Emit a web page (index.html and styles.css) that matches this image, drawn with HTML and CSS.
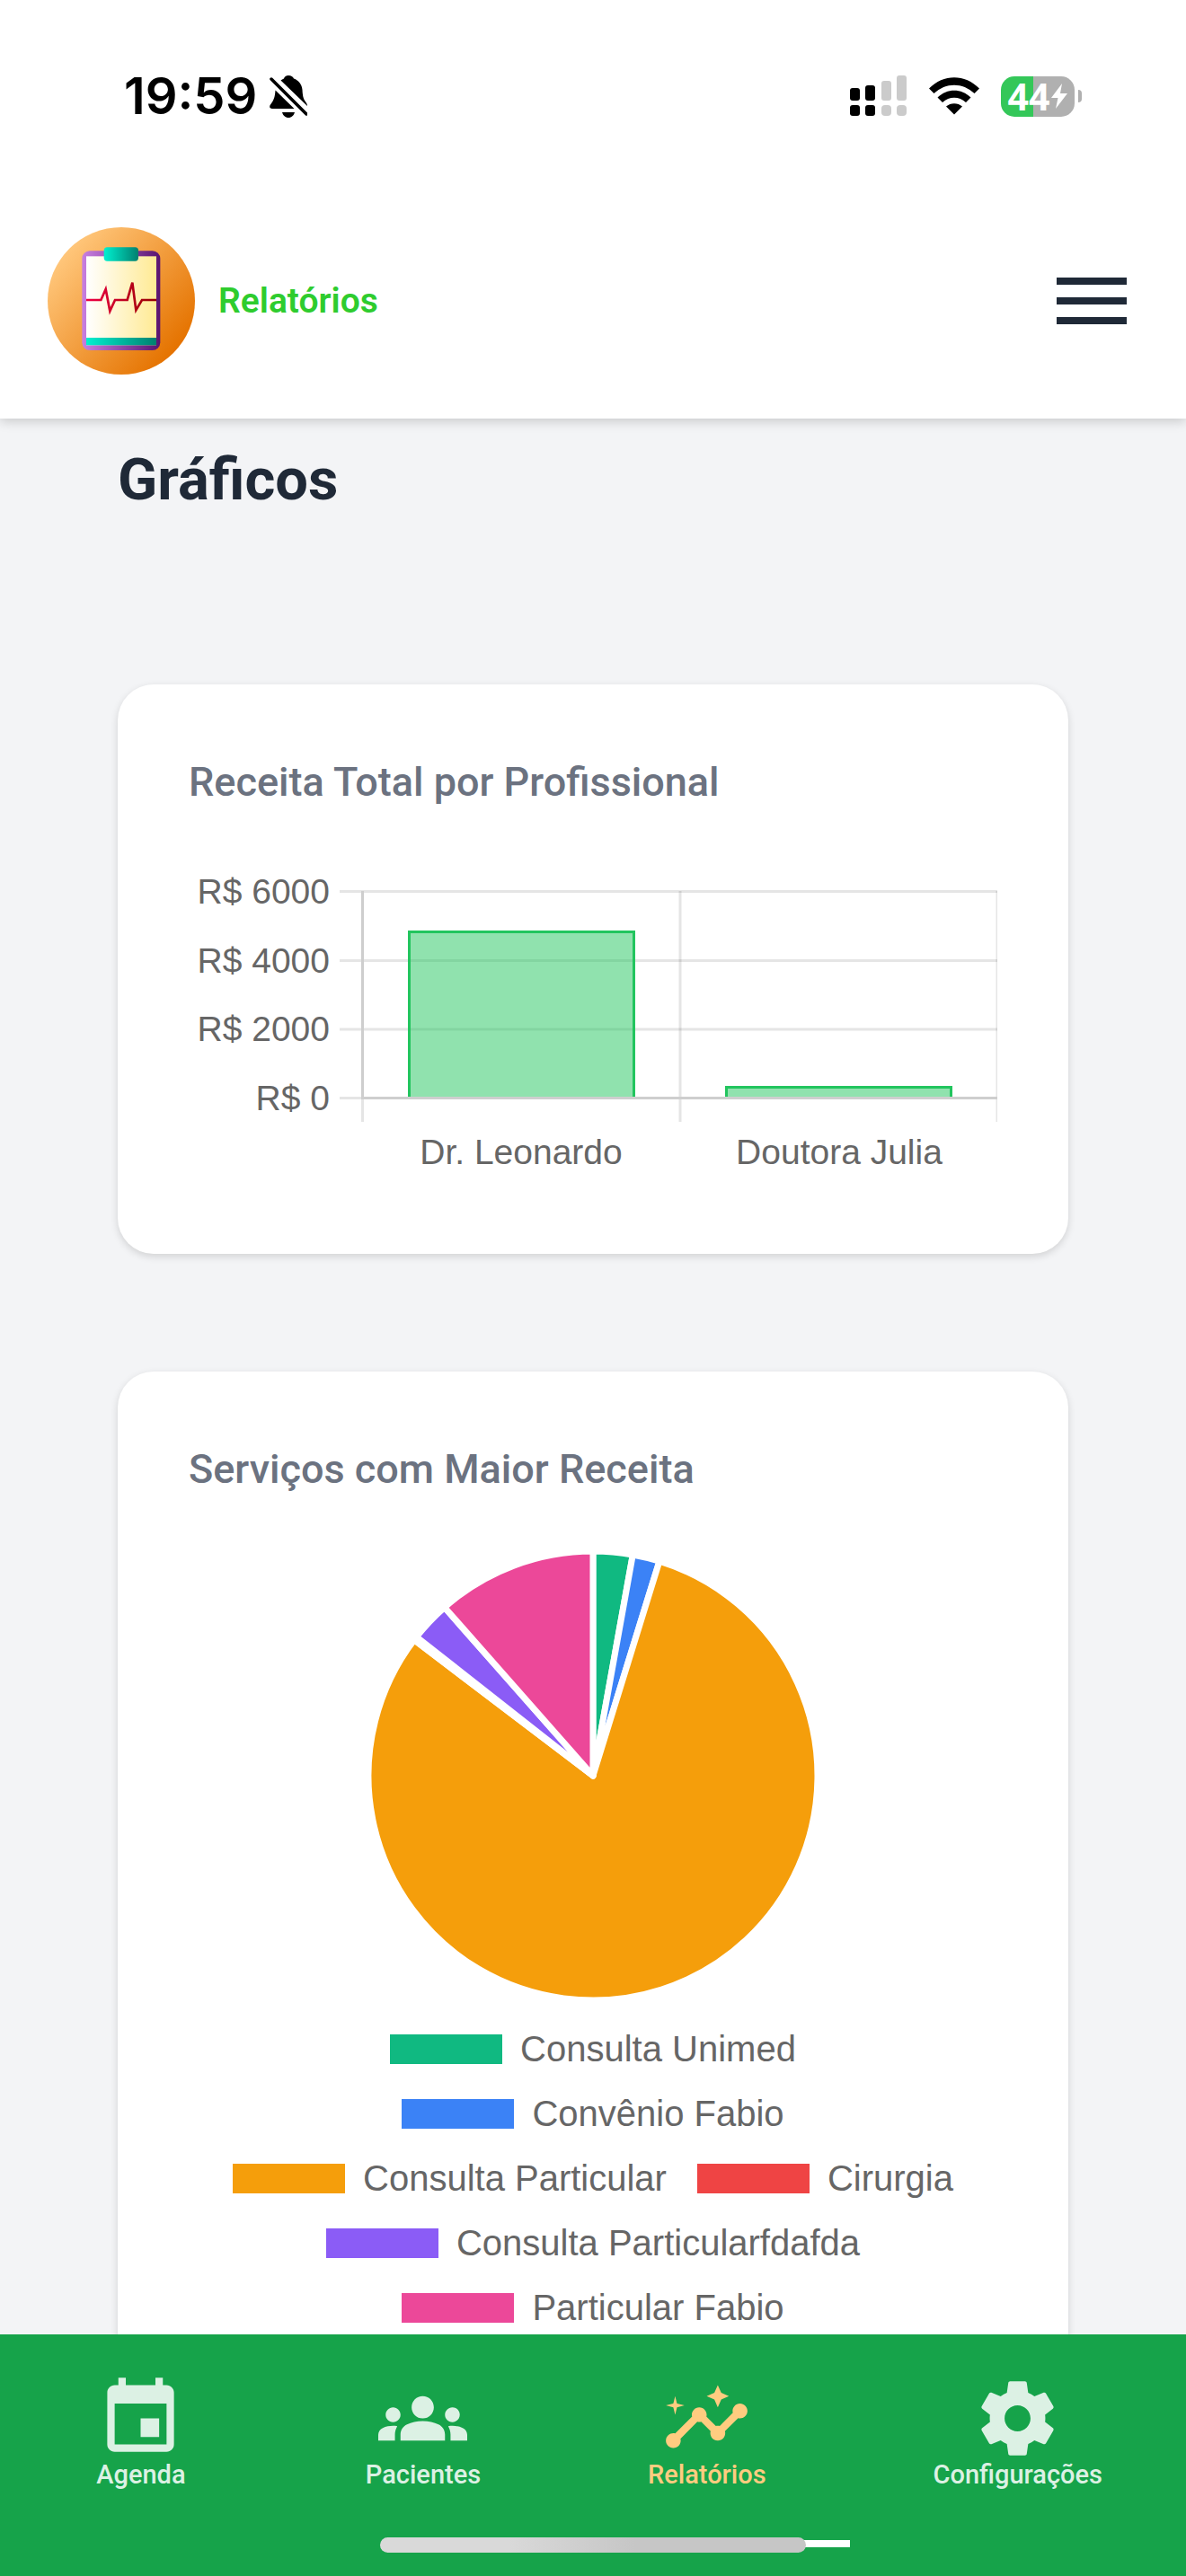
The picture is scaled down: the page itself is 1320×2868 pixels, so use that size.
FILE: index.html
```html
<!DOCTYPE html>
<html lang="pt-BR">
<head>
  <meta charset="UTF-8">
  <meta name="viewport" content="width=device-width, initial-scale=1.0">
  <title>Relatórios</title>
  <link rel="stylesheet" href="styles.css">
</head>
<body>
  <div class="app">
    <header class="header">
      <!-- Status bar -->
      <div class="status-bar">
        <div class="status-left">
          <span class="status-time">19:59</span>
          <svg class="icon-bell" viewBox="0 0 42 47" aria-hidden="true">
            <path d="M21 0c3 0 5 1.500 6 3.500 5.500 2 9 6.500 9.500 12.500.3 6 1 9.500 3 12.500 1.500 2 2.500 3.500 2.500 5.500L12.500 5.500c1-.8 2-1.500 3.500-2C16.500 1.500 18.500 0 21 0z"/>
            <path d="M6.500 16.500L27.500 37H3c-3 0-3.500-2.500-2-4.500 3.500-4.500 5-8 5.500-16z"/>
            <path d="M14 41h14c-1 3.500-3.500 6-7 6s-6-2.500-7-6z"/>
            <path d="M2 4l39 39" stroke="#000" stroke-width="3.500" stroke-linecap="round"/>
          </svg>
        </div>
        <div class="status-right">
          <svg class="icon-signal" viewBox="0 0 64 46" aria-hidden="true">
            <rect x="0" y="14" width="11" height="14" rx="3"/>
            <rect x="17" y="11" width="11" height="17" rx="3"/>
            <rect x="0" y="33" width="11" height="12" rx="3"/>
            <rect x="17" y="33" width="11" height="12" rx="3"/>
            <g fill="#cbcbcb">
              <rect x="35" y="6" width="11" height="22" rx="3"/>
              <rect x="52" y="0" width="11" height="28" rx="3"/>
              <rect x="35" y="33" width="11" height="12" rx="4"/>
              <rect x="52" y="33" width="11" height="12" rx="4"/>
            </g>
          </svg>
          <svg class="icon-wifi" viewBox="0 0 56 42" aria-hidden="true">
            <path d="M0 12.500C16-4 40-4 56 12.500L50.500 18C37.500 5.500 18.500 5.500 5.500 18z"/>
            <path d="M9.500 22.500c10.500-10.500 26.500-10.500 37 0L41 28c-7.500-7-18.500-7-26 0z"/>
            <path d="M19 32.500c5-4.500 13-4.500 18 0L28 41.500z"/>
          </svg>
          <div class="battery">
            <span class="battery-body">
              <span class="battery-level">44</span>
              <svg class="icon-bolt" viewBox="0 0 18 28" aria-hidden="true">
                <path d="M12 0L0 16h7.500L5 28l13-17h-8z" fill="#fff"/>
              </svg>
            </span>
            <span class="battery-cap"></span>
          </div>
        </div>
      </div>

      <!-- Title bar -->
      <div class="top-bar">
        <div class="brand">
          <svg class="logo" viewBox="0 0 492 492" aria-hidden="true">
            <defs>
              <linearGradient id="logoBg" x1="0.100" y1="0.200" x2="0.850" y2="0.850">
                <stop offset="0" stop-color="#ffc67a"/>
                <stop offset="1" stop-color="#e57300"/>
              </linearGradient>
              <linearGradient id="logoBoard">
                <stop offset="0" stop-color="#c87fe0"/>
                <stop offset="1" stop-color="#5a1370"/>
              </linearGradient>
              <linearGradient id="logoPaper">
                <stop offset="0" stop-color="#ffffff"/>
                <stop offset="1" stop-color="#ffea94"/>
              </linearGradient>
              <linearGradient id="logoTeal">
                <stop offset="0" stop-color="#00f0d0"/>
                <stop offset="1" stop-color="#00806f"/>
              </linearGradient>
              <linearGradient id="logoPulse" gradientUnits="userSpaceOnUse" x1="129" y1="0" x2="363" y2="0">
                <stop offset="0" stop-color="#f00044"/>
                <stop offset="1" stop-color="#960000"/>
              </linearGradient>
            </defs>
            <circle cx="246" cy="246" r="246" fill="url(#logoBg)"/>
            <rect x="115" y="79" width="261" height="332" rx="26" fill="url(#logoBoard)"/>
            <rect x="129" y="97" width="234" height="297" fill="url(#logoPaper)"/>
            <rect x="129" y="369" width="234" height="25" fill="url(#logoTeal)"/>
            <rect x="188" y="67" width="115" height="46" rx="11" fill="url(#logoTeal)"/>
            <path d="M129 243h49l16-36 14 73 17-37h41l17-58 12 92 20-34h48" fill="none" stroke="url(#logoPulse)" stroke-width="8"/>
          </svg>
          <span class="brand-title">Relatórios</span>
        </div>
        <button class="menu-button" type="button" aria-label="Menu">
          <span></span>
          <span></span>
          <span></span>
        </button>
      </div>
    </header>

    <main class="content">
      <h1>Gráficos</h1>

      <section class="card">
        <h2>Receita Total por Profissional</h2>
        <svg class="bar-chart" viewBox="0 0 900 380" role="img" aria-label="Receita Total por Profissional">
          <g class="grid">
            <path d="M168 54.500h732M168 131.500h732M168 208h732M168 284.500h732"/>
            <path d="M193.500 54v257M547 54v257M900 54v257"/>
          </g>
          <g class="bars">
            <rect x="244" y="98" width="253" height="186"/>
            <path d="M245.500 284V99.500h250V284"/>
            <rect x="597" y="271" width="253" height="13"/>
            <path d="M598.500 284v-11.500h250v11.500"/>
          </g>
          <path class="axis" d="M193.500 54v230M192 284.500h708"/>
          <g class="chart-text" text-anchor="end">
            <text x="157" y="68">R$ 6000</text>
            <text x="157" y="145">R$ 4000</text>
            <text x="157" y="221">R$ 2000</text>
            <text x="157" y="298">R$ 0</text>
          </g>
          <g class="chart-text" text-anchor="middle">
            <text x="370" y="358">Dr. Leonardo</text>
            <text x="724" y="358">Doutora Julia</text>
          </g>
        </svg>
      </section>

      <section class="card">
        <h2>Serviços com Maior Receita</h2>
        <svg class="pie-chart" viewBox="-250 -250 500 500" role="img" aria-label="Serviços com Maior Receita">
          <path fill="#10b981" d="M0 0V-250A250 250 0 0 1 44.300 -246z"/>
          <path fill="#3b82f6" d="M0 0L44.300 -246A250 250 0 0 1 73.900 -238.800z"/>
          <path fill="#f59e0b" d="M0 0L73.900 -238.800A250 250 0 1 1 -199.100 -151.200z"/>
          <path fill="#ef4444" d="M0 0L-199.100 -151.200A250 250 0 0 1 -196.500 -154.600z"/>
          <path fill="#8b5cf6" d="M0 0L-196.500 -154.600A250 250 0 0 1 -165.300 -187.500z"/>
          <path fill="#ec4899" d="M0 0L-165.300 -187.500A250 250 0 0 1 0 -250z"/>
        </svg>
        <ul class="legend">
          <li><span class="swatch green"></span>Consulta Unimed</li>
          <li><span class="swatch blue"></span>Convênio Fabio</li>
          <li><span class="swatch orange"></span>Consulta Particular</li>
          <li><span class="swatch red"></span>Cirurgia</li>
          <li><span class="swatch purple"></span>Consulta Particularfdafda</li>
          <li><span class="swatch pink"></span>Particular Fabio</li>
        </ul>
      </section>
    </main>

    <nav class="bottom-nav">
      <a href="#agenda">
        <svg viewBox="0 0 24 24" aria-hidden="true"><path d="M17 12h-5v5h5v-5zM16 1v2H8V1H6v2H5c-1.110 0-1.990.9-1.990 2L3 19c0 1.100.89 2 2 2h14c1.100 0 2-.9 2-2V5c0-1.100-.9-2-2-2h-1V1h-2zm3 18H5V8h14v11z"/></svg>
        <span>Agenda</span>
      </a>
      <a href="#pacientes">
        <svg viewBox="0 0 24 24" aria-hidden="true"><path d="M12 12.750c1.630 0 3.070.39 4.240.9 1.080.48 1.760 1.560 1.760 2.730V18H6v-1.610c0-1.180.68-2.260 1.760-2.730 1.170-.52 2.610-.91 4.240-.91zM4 13c1.100 0 2-.9 2-2s-.9-2-2-2-2 .9-2 2 .9 2 2 2zm1.130 1.100c-.37-.06-.74-.1-1.130-.1-.99 0-1.930.21-2.780.58C.48 14.900 0 15.620 0 16.430V18h4.500v-1.610c0-.83.23-1.610.63-2.290zM20 13c1.100 0 2-.9 2-2s-.9-2-2-2-2 .9-2 2 .9 2 2 2zm4 3.430c0-.81-.48-1.530-1.220-1.850-.85-.37-1.790-.58-2.780-.58-.39 0-.76.04-1.130.1.4.68.63 1.460.63 2.290V18H24v-1.570zM12 6c1.660 0 3 1.340 3 3s-1.340 3-3 3-3-1.340-3-3 1.340-3 3-3z"/></svg>
        <span>Pacientes</span>
      </a>
      <a class="active" href="#relatorios">
        <svg viewBox="0 0 24 24" aria-hidden="true"><path d="M21 8c-1.450 0-2.260 1.440-1.930 2.510l-3.550 3.560c-.3-.09-.74-.09-1.040 0l-2.550-2.550C12.270 10.450 11.460 9 10 9c-1.450 0-2.270 1.440-1.930 2.520l-4.560 4.550C2.440 15.740 1 16.550 1 18c0 1.100.9 2 2 2 1.450 0 2.260-1.440 1.930-2.510l4.550-4.560c.3.09.74.09 1.040 0l2.550 2.550C12.730 16.550 13.540 18 15 18c1.450 0 2.270-1.440 1.930-2.520l3.560-3.550C21.560 12.260 23 11.450 23 10c0-1.100-.9-2-2-2z"/><path d="M15 9l.94-2.070L18 6l-2.060-.93L15 3l-.92 2.070L12 6l2.080.93zM3.500 11L4 9l2-.5L4 8l-.5-2L3 8l-2 .5L3 9z"/></svg>
        <span>Relatórios</span>
      </a>
      <a href="#configuracoes">
        <svg viewBox="0 0 24 24" aria-hidden="true"><path d="M19.430 12.980c.04-.32.07-.64.07-.98s-.03-.66-.07-.98l2.110-1.650c.19-.15.24-.42.12-.64l-2-3.460c-.12-.22-.39-.3-.61-.22l-2.490 1c-.52-.4-1.080-.73-1.690-.98l-.38-2.650C14.460 2.180 14.250 2 14 2h-4c-.25 0-.46.18-.49.42l-.38 2.650c-.61.25-1.170.59-1.690.98l-2.490-1c-.23-.09-.49 0-.61.22l-2 3.460c-.13.22-.07.49.12.64l2.110 1.650c-.04.32-.07.65-.07.98s.03.66.07.98l-2.110 1.650c-.19.15-.24.42-.12.64l2 3.460c.12.22.39.3.61.22l2.490-1c.52.4 1.080.73 1.690.98l.38 2.650c.03.24.24.42.49.42h4c.25 0 .46-.18.49-.42l.38-2.650c.61-.25 1.170-.59 1.690-.98l2.490 1c.23.09.49 0 .61-.22l2-3.460c.12-.22.07-.49-.12-.64l-2.110-1.650zM12 15.500c-1.930 0-3.500-1.570-3.500-3.500s1.570-3.500 3.500-3.500 3.500 1.570 3.500 3.500-1.570 3.500-3.500 3.500z"/></svg>
        <span>Configurações</span>
      </a>
      <div class="nav-line"></div>
      <div class="home-indicator"></div>
    </nav>
  </div>
</body>
</html>
```
FILE: styles.css
```css
* {
  box-sizing: border-box;
}

body {
  margin: 0;
  font-family: Roboto, Arial, sans-serif;
  background: #f3f4f6;
  color: #1f2937;
}

.app {
  display: flex;
  flex-direction: column;
  height: 100vh;
}

/* Header */
.header {
  flex-shrink: 0;
  position: relative;
  z-index: 2;
  background: #fff;
  box-shadow: 0 3px 12px rgba(0, 0, 0, 0.18);
}

.status-bar {
  display: flex;
  justify-content: space-between;
  align-items: center;
  padding: 80px 116px 70px 138px;
  color: #000;
}

.status-left,
.status-right {
  display: flex;
  align-items: center;
  height: 54px;
}

.status-left {
  gap: 14px;
}

.status-right {
  gap: 24px;
}

.status-time {
  font-family: Inter, sans-serif;
  font-size: 56px;
  line-height: 54px;
  font-weight: 600;
}

.icon-bell {
  width: 42px;
  height: 47px;
}

.icon-signal {
  width: 64px;
  height: 46px;
}

.icon-wifi {
  width: 56px;
  height: 42px;
}

.battery {
  display: flex;
  align-items: center;
  gap: 4px;
}

.battery-body {
  display: flex;
  align-items: center;
  justify-content: center;
  gap: 2px;
  width: 82px;
  height: 45px;
  border-radius: 15px;
  background: linear-gradient(to right, #34c759 44%, #b0b0b0 44%);
}

.battery-level {
  font-family: "Open Sans", sans-serif;
  font-size: 41px;
  line-height: 45px;
  font-weight: 700;
  color: #fff;
}

.icon-bolt {
  width: 18px;
  height: 28px;
}

.battery-cap {
  width: 4px;
  height: 14px;
  border-radius: 0 4px 4px 0;
  background: #b0b0b0;
}

.top-bar {
  display: flex;
  justify-content: space-between;
  align-items: center;
  padding: 49px 66px 49px 53px;
}

.brand {
  display: flex;
  align-items: center;
  gap: 26px;
}

.logo {
  width: 164px;
  height: 164px;
}

.brand-title {
  font-size: 39px;
  line-height: 48px;
  font-weight: 600;
  color: #2ecc2e;
}

.menu-button {
  display: flex;
  flex-direction: column;
  gap: 14px;
  width: 78px;
  padding: 0;
  border: none;
  background: none;
  cursor: pointer;
}

.menu-button span {
  height: 8px;
  background: #1f2937;
}

/* Content */
.content {
  flex: 1;
  min-height: 0;
  overflow-y: auto;
  scrollbar-width: none;
  padding: 32px 131px;
}

h1 {
  margin: 0 0 192px;
  font-size: 65px;
  line-height: 72px;
  font-weight: 700;
}

.card {
  margin-bottom: 131px;
  padding: 78px 79px;
  background: #fff;
  border-radius: 40px;
  box-shadow: 0 3px 9px rgba(0, 0, 0, 0.14);
}

.card h2 {
  margin: 0;
  font-size: 45px;
  line-height: 62px;
  font-weight: 500;
  color: #6b7280;
}

/* Bar chart */
.bar-chart {
  display: block;
  width: 100%;
  margin-top: 36px;
}

.grid {
  fill: none;
  stroke: rgba(0, 0, 0, 0.1);
  stroke-width: 3;
}

.axis {
  fill: none;
  stroke: #cecece;
  stroke-width: 3;
}

.bars rect {
  fill: rgba(34, 197, 94, 0.5);
}

.bars path {
  fill: none;
  stroke: #22c55e;
  stroke-width: 3;
}

.chart-text {
  font-family: "Liberation Sans", Arial, sans-serif;
  font-size: 39px;
  fill: #666;
}

/* Pie chart */
.pie-chart {
  display: block;
  width: 500px;
  max-width: 100%;
  margin: 60px auto 18px;
}

.pie-chart path {
  stroke: #fff;
  stroke-width: 7;
  stroke-linejoin: round;
}

.legend {
  display: flex;
  flex-wrap: wrap;
  justify-content: center;
  column-gap: 34px;
  margin: 0;
  padding: 0;
  list-style: none;
  font-family: "Liberation Sans", Arial, sans-serif;
  font-size: 40px;
  line-height: 72px;
  color: #666;
}

.legend li {
  display: flex;
  align-items: center;
  gap: 20px;
}

.swatch {
  width: 125px;
  height: 33px;
}

.green {
  background: #10b981;
}

.blue {
  background: #3b82f6;
}

.orange {
  background: #f59e0b;
}

.red {
  background: #ef4444;
}

.purple {
  background: #8b5cf6;
}

.pink {
  background: #ec4899;
}

/* Bottom navigation */
.bottom-nav {
  flex-shrink: 0;
  position: relative;
  z-index: 2;
  display: flex;
  justify-content: space-around;
  padding: 44px 0 101px;
  background: #16a34a;
}

.bottom-nav a {
  display: flex;
  flex-direction: column;
  align-items: center;
  gap: 1px;
  min-width: 128px;
  color: #dcf1e4;
  font-size: 29px;
  line-height: 24px;
  font-weight: 500;
  text-decoration: none;
}

.bottom-nav a.active {
  color: #ffcc80;
}

.bottom-nav svg {
  width: 99px;
  height: 99px;
  fill: currentColor;
}

.nav-line {
  position: absolute;
  left: 50%;
  bottom: 32px;
  width: 286px;
  height: 8px;
  background: #fff;
}

.home-indicator {
  position: absolute;
  left: 50%;
  bottom: 26px;
  width: 474px;
  height: 17px;
  margin-left: -237px;
  border-radius: 9px;
  background: linear-gradient(to right, #d9d9d9 30%, #c6c6c6 60%);
}
```
